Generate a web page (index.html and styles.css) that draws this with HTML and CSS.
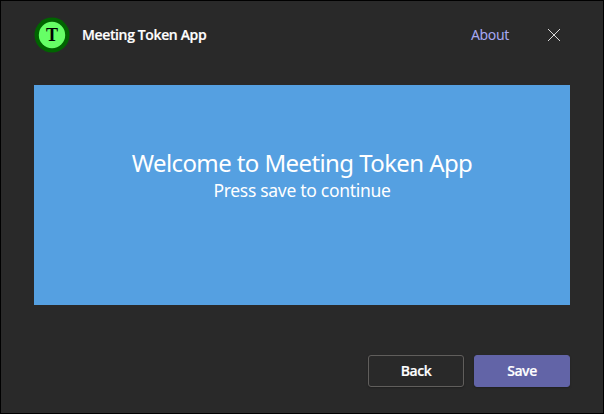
FILE: index.html
```html
<!DOCTYPE html>
<html lang="en">
<head>
<meta charset="utf-8">
<title>Meeting Token App</title>
<link rel="stylesheet" href="styles.css">
</head>
<body>
<main class="dialog">
  <header class="header">
    <svg class="logo" viewBox="0 0 36 36" aria-hidden="true">
      <circle cx="18" cy="18" r="17.5" fill="#006400"/>
      <circle cx="18" cy="18" r="13.2" fill="#66ff66"/>
      <text class="logo-letter" x="18" y="24" text-anchor="middle">T</text>
    </svg>
    <h1 class="title">Meeting Token App</h1>
    <a class="about">About</a>
    <svg class="close" viewBox="0 0 14 14" aria-label="Close"><path d="M1 1 13 13M13 1 1 13"/></svg>
  </header>
  <section class="banner">
    <h2 class="welcome">Welcome to Meeting Token App</h2>
    <p class="hint">Press save to continue</p>
  </section>
  <footer class="footer">
    <button class="button"><span>Back</span></button>
    <button class="button primary"><span>Save</span></button>
  </footer>
</main>
</body>
</html>
```
FILE: styles.css
```css
* { box-sizing: border-box; margin: 0; padding: 0; }
body {
  width: 604px;
  height: 414px;
  overflow: hidden;
  background: #000;
  font-family: "Noto Sans", "Open Sans", sans-serif;
  color: #fff;
}
.dialog {
  display: flex;
  flex-direction: column;
  height: 414px;
  padding: 16px 33px 25px;
  border: 1px solid #000;
  background: #292929;
}
.header {
  display: flex;
  align-items: center;
  height: 36px;
}
.logo { width: 36px; height: 36px; }
.logo-letter {
  font: bold 18px "Liberation Serif", serif;
  fill: #000;
}
.title {
  margin-left: 12px;
  font-family: "Open Sans", sans-serif;
  font-size: 14px;
  font-weight: 600;
  line-height: 20px;
  letter-spacing: -0.37px;
  white-space: nowrap;
  -webkit-text-stroke: 0.2px currentColor;
}
.about {
  margin-left: auto;
  font-size: 14px;
  line-height: 20px;
  letter-spacing: -0.35px;
  color: #a6a7f2;
}
.close {
  width: 14px;
  height: 14px;
  margin: 0 9px 0 38px;
  fill: none;
  stroke: #d8d8d8;
  stroke-width: 1;
}
.banner {
  height: 220px;
  margin-top: 32px;
  padding-top: 62px;
  background: #55a0e1;
  text-align: center;
}
.welcome {
  font-size: 24px;
  font-weight: 400;
  line-height: 32px;
  letter-spacing: -0.6px;
}
.hint {
  font-size: 17.5px;
  line-height: 22px;
  letter-spacing: -0.3px;
}
.footer {
  display: flex;
  justify-content: flex-end;
  gap: 10px;
  margin-top: 50px;
}
.button {
  width: 96px;
  height: 32px;
  border: 1px solid #605e5c;
  border-radius: 3px;
  background: #292929;
  box-shadow: 0 1px 2px rgba(0, 0, 0, 0.25);
  color: #fff;
  font-family: "Open Sans", sans-serif;
  font-size: 14px;
  font-weight: 600;
  line-height: 20px;
  letter-spacing: -0.45px;
  -webkit-text-stroke: 0.2px currentColor;
}
.primary {
  border-color: #6264a7;
  background: #6264a7;
}
```
